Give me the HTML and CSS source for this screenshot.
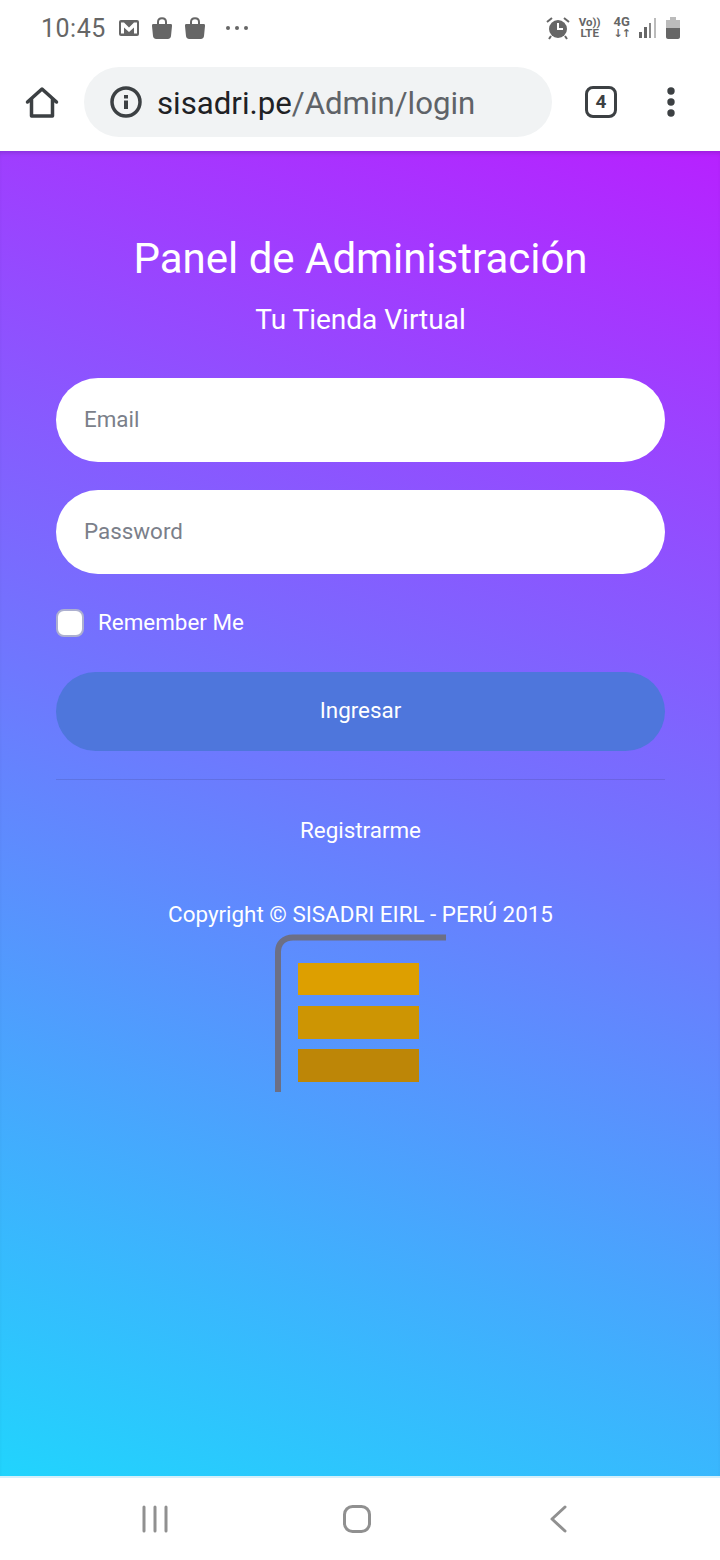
FILE: index.html
```html
<!DOCTYPE html>
<html>
    <head>
        <meta charset="utf-8">
        <title>Panel de Administración</title>
        <link rel="stylesheet" href="styles.css">
    </head>
    <body>
        <div class="status">
            <span class="time">10:45</span>
            <svg class="st-ic" width="22" height="20" viewBox="0 0 22 20"><rect x="1" y="2" width="20" height="16" rx="2" fill="#666"/><path d="M3 4.500h3l5 5 5-5h3v11h-3V9.500l-5 4.500-5-4.500v6H3z" fill="#fff"/></svg>
            <svg class="st-ic" width="22" height="24" viewBox="0 0 22 24"><path d="M2 8h18c1 0 1 1 1 2l-1 10c0 2-2 3-3 3H5c-1 0-3-1-3-3L1 10c0-1 0-2 1-2z" fill="#666"/><path d="M7 10V6c0-5 8-5 8 0v4" fill="none" stroke="#666" stroke-width="2"/></svg>
            <svg class="st-ic" width="22" height="24" viewBox="0 0 22 24"><path d="M2 8h18c1 0 1 1 1 2l-1 10c0 2-2 3-3 3H5c-1 0-3-1-3-3L1 10c0-1 0-2 1-2z" fill="#666"/><path d="M7 10V6c0-5 8-5 8 0v4" fill="none" stroke="#666" stroke-width="2"/></svg>
            <svg class="st-dots" width="24" height="6" viewBox="0 0 24 6"><circle cx="3" cy="3" r="2" fill="#666"/><circle cx="12" cy="3" r="2" fill="#666"/><circle cx="21" cy="3" r="2" fill="#666"/></svg>
            <div class="st-right">
                <svg class="alarm" width="24" height="24" viewBox="0 0 24 24"><circle cx="12" cy="13" r="9" fill="#666"/><path d="M12 7v6h5" fill="none" stroke="#fff" stroke-width="2"/><path d="M1 6l5-4M23 6l-5-4M5 20l-2 3M19 20l2 3" stroke="#666" stroke-width="2"/></svg>
                <div class="st-txt"><span>Vo))</span><span>LTE</span></div>
                <div class="st-txt st-4g"><span>4G</span><span class="arrows">↓↑</span></div>
                <svg width="20" height="22" viewBox="0 0 20 22"><path d="M1 15h3v6H1zM6 10h3v11H6z" fill="#666"/><path d="M11 6h2v15h-2z" fill="#888"/><path d="M16 1h2v20h-2z" fill="#bbb"/></svg>
                <svg width="15" height="24" viewBox="0 0 15 24"><path d="M4 1h6v3h4v8H0V4h4z" fill="#bbb"/><path d="M0 12h14v9c0 1-1 2-2 2H2c-1 0-2-1-2-2z" fill="#666"/></svg>
            </div>
        </div>
        <div class="toolbar">
            <svg class="home" width="36" height="36" viewBox="0 0 36 36"><path d="M3.500 18L18 5l14.500 13M7.500 15v17h21V15" fill="none" stroke="#3c4043" stroke-width="3.500" stroke-linejoin="round" stroke-linecap="round"/></svg>
            <div class="omnibox">
                <svg width="32" height="32" viewBox="0 0 32 32"><circle cx="16" cy="16" r="14" fill="none" stroke="#3c4043" stroke-width="3.500"/><path d="M14 14.500h4V23h-4zM14 9h4v3.500h-4z" fill="#3c4043"/></svg>
                <span class="url"><span class="host">sisadri.pe</span>/Admin/login</span>
            </div>
            <div class="tabs">4</div>
            <svg class="menu" width="12" height="32" viewBox="0 0 12 32"><circle cx="6" cy="5" r="3.700" fill="#3c4043"/><circle cx="6" cy="16" r="3.700" fill="#3c4043"/><circle cx="6" cy="27" r="3.700" fill="#3c4043"/></svg>
        </div>
        <div class="main">
            <h1>Panel de Administración</h1>
            <p class="sub">Tu Tienda Virtual</p>
            <input class="field" type="text" placeholder="Email">
            <input class="field" type="text" placeholder="Password">
            <label class="remember"><span class="check"></span><span class="rem-txt">Remember Me</span></label>
            <button class="btn">Ingresar</button>
            <div class="line"></div>
            <a class="reg" href="javascript:;">Registrarme</a>
            <p class="copy">Copyright © SISADRI EIRL - PERÚ 2015</p>
            <svg class="logo" width="171" height="158" viewBox="0 0 171 158">
                <path d="M3 158V18C3 9 9 3.500 18 3.500H171" fill="none" stroke="#6c6f85" stroke-width="6"/>
                <rect x="23" y="29" width="121" height="32" fill="#dd9f00"/>
                <rect x="23" y="72" width="121" height="33" fill="#cd9503"/>
                <rect x="23" y="115" width="121" height="33" fill="#bd8607"/>
            </svg>
        </div>
        <div class="nav">
            <svg width="28" height="28" viewBox="0 0 28 28"><path d="M3 2v24M14 2v24M25 2v24" stroke="#909090" stroke-width="3" stroke-linecap="round"/></svg>
            <svg class="nav-home" width="28" height="28" viewBox="0 0 28 28"><rect x="1.500" y="1.500" width="25" height="25" rx="8" fill="none" stroke="#909090" stroke-width="3"/></svg>
            <svg class="nav-back" width="17" height="28" viewBox="0 0 17 28"><path d="M15 2L2 14l13 12" fill="none" stroke="#909090" stroke-width="3" stroke-linecap="round" stroke-linejoin="round"/></svg>
        </div>
    </body>
</html>
```
FILE: styles.css
```css
*{
    margin: 0;
    padding: 0;
    box-sizing: border-box;
}
body{
    width: 720px;
    height: 1560px;
    overflow: hidden;
    background-color: #fff;
    font-family: Roboto, "Liberation Sans", sans-serif;
}
.status{
    height: 56px;
    padding: 0 39px 0 41px;
    display: flex;
    align-items: center;
    color: #666;
}
.time{
    font-size: 25px;
    letter-spacing: 0.5px;
    width: 77px;
}
.st-ic{
    margin-right: 11px;
}
.st-dots{
    margin-left: 8px;
}
.st-right{
    margin-left: auto;
    display: flex;
    align-items: center;
    gap: 8px;
}
.alarm{
    margin-right: 1px;
}
.st-txt{
    display: flex;
    flex-direction: column;
    align-items: center;
    font-size: 11.500px;
    font-weight: 700;
    line-height: 11px;
}
.st-4g{
    margin-left: 5px;
    font-size: 13px;
    line-height: 12px;
}
.arrows{
    font-family: "DejaVu Sans", sans-serif;
    font-size: 11px;
    letter-spacing: -1px;
}
.toolbar{
    height: 95px;
    display: flex;
    align-items: center;
    padding: 0 0 4px 24px;
}
.home{
    flex: none;
}
.omnibox{
    width: 468px;
    height: 70px;
    margin-left: 24px;
    padding-left: 26px;
    border-radius: 35px;
    background-color: #f1f3f4;
    display: flex;
    align-items: center;
    gap: 15px;
}
.url{
    padding-top: 4px;
    font-size: 31.200px;
    color: #5f6368;
}
.host{
    color: #202124;
}
.tabs{
    width: 32px;
    height: 32px;
    margin-left: 33px;
    border: 3.500px solid #3c4043;
    border-radius: 8px;
    font-size: 19px;
    font-weight: 700;
    color: #3c4043;
    display: flex;
    align-items: center;
    justify-content: center;
}
.menu{
    margin-left: 48px;
}
.main{
    height: 1325px;
    padding: 0 55px 0 56px;
    background: linear-gradient(19deg, #21d4fd 0%, #b721ff 100%);
    box-shadow: inset 0 4px 4px -2px rgba(0,0,0,0.15);
    display: flex;
    flex-direction: column;
    align-items: center;
    color: #fff;
}
h1{
    margin-top: 83px;
    font-size: 42px;
    font-weight: 400;
    line-height: 50px;
}
.sub{
    margin-top: 18px;
    font-size: 28px;
    line-height: 36px;
    margin-bottom: 40px;
}
.field{
    width: 100%;
    height: 84px;
    margin-bottom: 28px;
    padding: 0 28px 2px;
    border: none;
    border-radius: 42px;
    background-color: #fff;
    font-family: inherit;
    font-size: 22.400px;
}
.field::placeholder{
    color: #7b7f8a;
}
.remember{
    align-self: flex-start;
    margin-top: 7px;
    display: flex;
    align-items: center;
    gap: 14px;
    font-size: 22.400px;
    line-height: 28px;
}
.rem-txt{
    margin-top: -2px;
}
.check{
    width: 28px;
    height: 28px;
    border: 2px solid #adb0d0;
    border-radius: 8px;
    background-color: #fff;
}
.btn{
    width: 100%;
    height: 79px;
    margin-top: 35px;
    padding-bottom: 4px;
    border: none;
    border-radius: 40px;
    background-color: #4e76dc;
    color: #fff;
    font-family: inherit;
    font-size: 22.400px;
}
.line{
    width: 100%;
    height: 1px;
    margin-top: 28px;
    background-color: rgba(60,60,120,0.2);
}
.reg{
    margin-top: 36px;
    color: #fff;
    font-size: 22.400px;
    line-height: 28px;
    text-decoration: none;
}
.copy{
    margin-top: 56px;
    font-size: 22.400px;
    line-height: 28px;
}
.logo{
    margin-top: 6px;
}
.nav{
    height: 84px;
    border-top: 2px solid #d5f0fb;
    background-color: #fff;
    display: flex;
    align-items: center;
    padding-left: 141px;
}
.nav-home{
    margin-left: 174px;
}
.nav-back{
    margin-left: 179px;
}
```
